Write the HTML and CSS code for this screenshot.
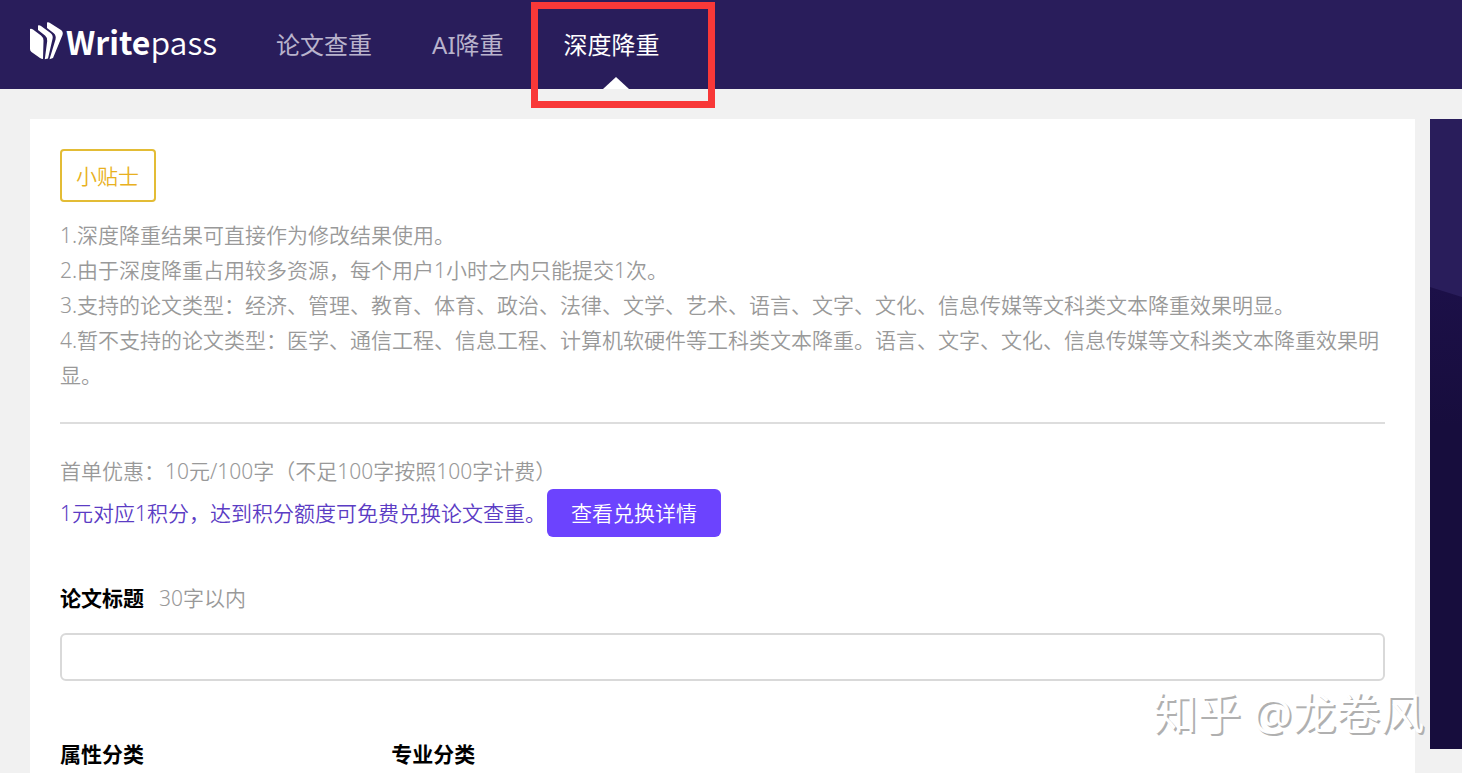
FILE: index.html
```html
<!DOCTYPE html>
<html lang="zh-CN">
<head>
<meta charset="utf-8">
<title>Writepass</title>
<link rel="stylesheet" href="styles.css">
</head>
<body>
<header class="header">
  <a class="logo" href="#" aria-label="Writepass">
    <svg class="logo-mark" width="34" height="40" viewBox="0 0 34 40" aria-hidden="true">
      <path d="M0 7 Q1.500 6.500 3 7.500 L11 13.500 Q13.500 15.500 13.500 18.500 L13 37 Q11.500 37 10 36 L1.500 30 Q0 29 0 27Z"/>
      <path d="M8 3.500 Q9.500 3 11 4 L20.500 11 Q23.500 13.500 22.500 17 L18 36.500 L14.800 37.200 L17.200 19 Q17.500 15.500 15 13.500 L8 8Z"/>
      <path d="M17 0.500 Q18.500 0 20 1 L31 8 Q33.500 10 32.500 13 L23 36 L19.500 37.200 L25.500 17.500 Q26.500 13.500 23.500 11 L17 6Z"/>
    </svg>
    <span class="logo-text"><b>Write</b>pass</span>
  </a>
  <nav class="nav">
    <a class="nav-link" href="#">论文查重</a>
    <a class="nav-link" href="#">AI降重</a>
    <a class="nav-link active" href="#">深度降重</a>
  </nav>
  <div class="highlight"></div>
</header>
<div class="page">
  <main class="card">
    <span class="tag">小贴士</span>
    <div class="tips">
      <p>1.深度降重结果可直接作为修改结果使用。</p>
      <p>2.由于深度降重占用较多资源，每个用户1小时之内只能提交1次。</p>
      <p>3.支持的论文类型：经济、管理、教育、体育、政治、法律、文学、艺术、语言、文字、文化、信息传媒等文科类文本降重效果明显。</p>
      <p>4.暂不支持的论文类型：医学、通信工程、信息工程、计算机软硬件等工科类文本降重。语言、文字、文化、信息传媒等文科类文本降重效果明显。</p>
    </div>
    <hr class="divider">
    <p class="price">首单优惠：10元/100字（不足100字按照100字计费）</p>
    <div class="points">
      <span>1元对应1积分，达到积分额度可免费兑换论文查重。</span>
      <button class="detail" type="button">查看兑换详情</button>
    </div>
    <form class="form">
      <div class="field-head">
        <label class="label" for="title">论文标题</label>
        <span class="hint">30字以内</span>
      </div>
      <input class="input" id="title" type="text" maxlength="30">
      <div class="categories">
        <span class="label">属性分类</span>
        <span class="label">专业分类</span>
      </div>
    </form>
  </main>
  <aside class="side">
    <svg class="side-art" viewBox="0 0 32 630" preserveAspectRatio="none" aria-hidden="true">
      <defs>
        <linearGradient id="shade" x1="0" y1="0" x2="0" y2="1">
          <stop offset="0" stop-color="#1c1048"/>
          <stop offset="0.300" stop-color="#170d3d"/>
          <stop offset="1" stop-color="#170d3d"/>
        </linearGradient>
      </defs>
      <path d="M0 168 L32 178 V630 H0Z" fill="url(#shade)"/>
    </svg>
  </aside>
</div>
<div class="watermark">知乎 @龙卷风</div>
</body>
</html>
```
FILE: styles.css
```css
* {
  box-sizing: border-box;
}

body {
  margin: 0;
  height: 100vh;
  overflow: hidden;
  position: relative;
  background: #f1f1f1;
  color: #999;
  font-family: "Noto Sans", "Noto Sans CJK SC", sans-serif;
  font-size: 21px;
  font-weight: 350;
  line-height: 35px;
}

p {
  margin: 0;
}

.header {
  position: relative;
  display: flex;
  align-items: center;
  gap: 59px;
  height: 89px;
  padding-left: 30px;
  background: #291d5b;
}

.logo {
  display: flex;
  align-items: center;
  gap: 2px;
  padding-bottom: 6px;
  color: #fff;
  text-decoration: none;
}

.logo-mark {
  fill: #fff;
}

.logo-text {
  font-family: "Noto Sans CJK SC", sans-serif;
  font-size: 32px;
  font-weight: 350;
  line-height: 40px;
  padding-bottom: 2px;
}

.logo-text b {
  font-weight: 700;
}

.nav {
  display: flex;
  gap: 60px;
  height: 100%;
}

.nav-link {
  position: relative;
  color: #b9b3cc;
  font-size: 24px;
  font-weight: 400;
  line-height: 90px;
  text-decoration: none;
}

.nav-link.active {
  color: #fff;
}

.nav-link.active::after {
  content: "";
  position: absolute;
  bottom: 0;
  left: 39px;
  border: 13px solid transparent;
  border-top: 0;
  border-bottom: 12px solid #fff;
}

.highlight {
  position: absolute;
  top: 2px;
  left: 531px;
  width: 184px;
  height: 106px;
  border: 7px solid #f83838;
}

.page {
  display: flex;
  align-items: flex-start;
  gap: 15px;
  padding: 30px 0 0 30px;
}

.card {
  flex: 1;
  min-width: 0;
  height: calc(100vh - 119px);
  overflow: hidden;
  padding: 30px 30px 0;
  background: #fff;
}

.tag {
  display: block;
  width: fit-content;
  padding: 8px 15px 6px 14px;
  border: 2px solid #e3bc35;
  border-radius: 4px;
  color: #e8b020;
}

.tips {
  margin-top: 16px;
}

.divider {
  margin: 29px 0 30px;
  border: 0;
  border-top: 2px solid #ddd;
}

.points {
  display: flex;
  align-items: center;
  gap: 1px;
  color: #5b3cc4;
}

.detail {
  height: 48px;
  padding: 0 24px;
  border: 0;
  border-radius: 6px;
  background: #6c43fe;
  color: #fff;
  font: inherit;
}

.form {
  margin-top: 44px;
}

.field-head {
  display: flex;
  gap: 15px;
}

.label {
  color: #000;
  font-weight: 700;
}

.input {
  display: block;
  width: 100%;
  height: 48px;
  margin-top: 17px;
  padding: 0 15px;
  border: 2px solid #d9d9d9;
  border-radius: 6px;
  background: #fff;
  font: inherit;
}

.categories {
  display: grid;
  grid-template-columns: repeat(4, 1fr);
  margin-top: 56px;
}

.side {
  flex: 0 0 32px;
  height: 630px;
  background: #291d5b;
}

.side-art {
  display: block;
  width: 100%;
  height: 100%;
}

.watermark {
  position: absolute;
  right: 38px;
  bottom: 30px;
  color: #fff;
  font-size: 44px;
  font-weight: 400;
  line-height: 60px;
  text-shadow: 2px 2px 0 #b0b0b0;
}
```
